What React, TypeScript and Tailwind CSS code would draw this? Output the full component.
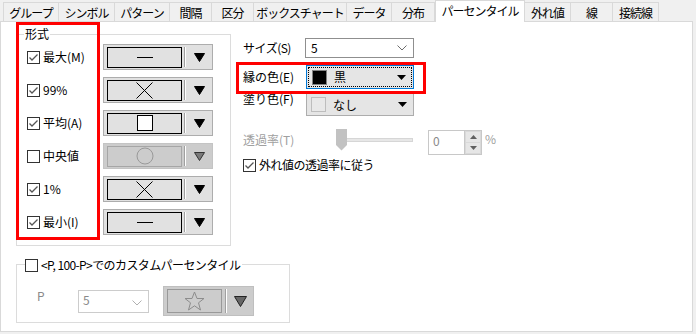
import React from "react";

const tabs = [
  { label: "グループ", w: "w-[56px]" },
  { label: "シンボル", w: "w-[56px]" },
  { label: "パターン", w: "w-[55px]" },
  { label: "間隔", w: "w-[42px]" },
  { label: "区分", w: "w-[42px]" },
  { label: "ボックスチャート", w: "w-[93px]" },
  { label: "データ", w: "w-[45px]" },
  { label: "分布", w: "w-[43px]" },
  { label: "パーセンタイル", w: "w-[90px]", active: true },
  { label: "外れ値", w: "w-[46px]" },
  { label: "線", w: "w-[42px]" },
  { label: "接続線", w: "w-[46px]" },
];

const CheckBox = ({ checked }: { checked: boolean }) => (
  <span className="flex h-[13px] w-[13px] shrink-0 items-center justify-center border border-[#333333] bg-white">
    {checked && (
      <svg width="11" height="11" viewBox="0 0 11 11">
        <polyline points="1.5,5.5 4,8 9.5,2.5" fill="none" stroke="#555555" strokeWidth="1.3" />
      </svg>
    )}
  </span>
);

const DownArrow = ({ disabled }: { disabled?: boolean }) => (
  <svg width="11" height="9" viewBox="0 0 11 9">
    <polygon
      points="0.5,0.5 10.5,0.5 5.5,8.5"
      fill={disabled ? "#7a7a7a" : "#000000"}
      stroke={disabled ? "#333333" : "#000000"}
      strokeWidth="1"
    />
  </svg>
);

const Chevron = ({ color }: { color: string }) => (
  <svg width="10" height="6" viewBox="0 0 10 6">
    <polyline points="0.5,0.5 5,5 9.5,0.5" fill="none" stroke={color} strokeWidth="1" />
  </svg>
);

const SmallArrow = () => (
  <svg width="9" height="5" viewBox="0 0 9 5">
    <polygon points="0,0 9,0 4.5,5" fill="#000000" />
  </svg>
);

// 記号の見本
const Glyph = ({ kind }: { kind: string }) => {
  if (kind === "dash") return <div className="h-px w-[16px] bg-black" />;
  if (kind === "x")
    return (
      <svg width="17" height="17" viewBox="0 0 17 17">
        <line x1="0.5" y1="0.5" x2="16.5" y2="16.5" stroke="#000" strokeWidth="1" />
        <line x1="16.5" y1="0.5" x2="0.5" y2="16.5" stroke="#000" strokeWidth="1" />
      </svg>
    );
  if (kind === "square") return <div className="h-[16px] w-[16px] border border-black bg-white" />;
  if (kind === "circle")
    return (
      <svg width="18" height="18" viewBox="0 0 18 18">
        <circle cx="9" cy="9" r="8" fill="#cccccc" stroke="#999999" strokeWidth="1" />
      </svg>
    );
  return null;
};

const SymbolButton = ({ kind, disabled }: { kind: string; disabled?: boolean }) => (
  <div
    className={`flex h-[26px] w-[110px] items-center border ${
      disabled ? "border-[#c4c4c4] bg-[#cccccc]" : "border-[#adadad] bg-[#e1e1e1]"
    }`}
  >
    <div
      className={`ml-[3px] flex h-[21px] w-[75px] items-center justify-center border ${
        disabled ? "border-[#a6a6a6]" : "border-black"
      }`}
    >
      <Glyph kind={kind} />
    </div>
    <div className="ml-[2px] h-[20px] w-px bg-[#a0a0a0]" />
    <div className="h-[20px] w-px bg-white" />
    <div className="flex flex-1 justify-center">
      <DownArrow disabled={disabled} />
    </div>
  </div>
);

const rows = [
  { label: "最大(M)", checked: true, kind: "dash" },
  { label: "99%", checked: true, kind: "x" },
  { label: "平均(A)", checked: true, kind: "square" },
  { label: "中央値", checked: false, kind: "circle", disabled: true },
  { label: "1%", checked: true, kind: "x" },
  { label: "最小(I)", checked: true, kind: "dash" },
];

export default function App() {
  return (
    <div className="h-[334px] w-[696px] overflow-hidden bg-[#f0f0f0] font-['Noto_Sans_CJK_JP','Noto_Sans',sans-serif] text-[12px] text-black">
      {/* タブ */}
      <div className="flex h-[22px] items-end pl-[3px]">
        {tabs.map((t, i) => (
          <div
            key={t.label}
            className={`${t.w} flex items-center justify-center whitespace-nowrap border-t border-r border-[#d9d9d9] tracking-[-1px] ${
              i === 0 ? "border-l" : ""
            } ${t.active ? "relative z-10 h-[22px] border-l bg-white pb-[2px]" : "h-[20px] bg-[#f0f0f0]"}`}
          >
            {t.label}
          </div>
        ))}
      </div>

      {/* パネル */}
      <div className="relative -mt-px flex h-[311px] w-[693px] flex-col border border-[#d9d9d9] bg-white">
        <div className="flex">
          {/* 形式 */}
          <div className="relative ml-[15px] mt-[12px] h-[212px] w-[215px] border border-[#dcdcdc] pl-[10px] pt-[9px]">
            <span className="absolute left-[7px] top-[-9px] bg-white px-[1px] leading-[16px]">形式</span>
            <div className="flex flex-col gap-[7px]">
              {rows.map((r) => (
                <div key={r.label} className="flex h-[26px] items-center">
                  <div className="flex w-[76px] items-center">
                    <CheckBox checked={r.checked} />
                    <span className="ml-[3px] leading-[16px]">{r.label}</span>
                  </div>
                  <SymbolButton kind={r.kind} disabled={r.disabled} />
                </div>
              ))}
            </div>
          </div>

          {/* 右側 */}
          <div className="ml-[12px] flex flex-col">
            <div className="mt-[16px] flex h-[20px] items-center">
              <span className="w-[62px] tracking-[-0.5px]">サイズ(S)</span>
              <div className="flex h-[20px] w-[109px] items-center justify-between border border-[#8f8f8f] bg-white pl-[5px] pr-[6px]">
                <span>5</span>
                <Chevron color="#6d6d6d" />
              </div>
            </div>

            <div className="mt-[7px] flex h-[24px] items-center">
              <span className="w-[63px]">縁の色(E)</span>
              <div className="h-[24px] w-[108px] border border-[#0078d7] bg-[#e5e5e5] p-px">
                <div className="flex h-full items-center border border-dotted border-black pl-[3px] pr-[5px]">
                  <div className="h-[15px] w-[15px] border border-[#808080] bg-black" />
                  <span className="ml-[7px] flex-1">黒</span>
                  <SmallArrow />
                </div>
              </div>
            </div>

            <div className="mt-[4px] flex h-[23px] items-start">
              <span className="-mt-[2px] w-[63px] leading-[16px]">塗り色(F)</span>
              <div className="flex h-[23px] w-[108px] items-center border border-[#adadad] bg-[#e5e5e5] pl-[4px] pr-[6px]">
                <div className="h-[15px] w-[15px] border border-[#bdbdbd] bg-[#e8e8e8]" />
                <span className="ml-[7px] flex-1">なし</span>
                <SmallArrow />
              </div>
            </div>

            <div className="mt-[13px] flex items-start">
              <span className="mt-[3px] w-[93px] leading-[16px] text-[#a0a0a0]">透過率(T)</span>
              <div className="relative h-[22px] w-[77px]">
                <div className="absolute left-[4px] right-0 top-[9px] h-[4px] border border-[#d6d6d6] bg-[#e7e7e7]" />
                <svg className="absolute left-0 top-0" width="11" height="22" viewBox="0 0 11 22">
                  <polygon points="0,0 11,0 11,16 5.5,21.5 0,16" fill="#c2c2c2" />
                </svg>
              </div>
              <div className="ml-[15px] mt-px flex h-[25px] w-[54px] border border-[#c8c8c8] bg-white">
                <span className="flex-1 pl-[4px] leading-[20px] text-[#8a8a8a]">0</span>
                <div className="flex w-[17px] flex-col gap-px border-l border-[#c8c8c8] bg-[#d9d9d9] p-px">
                  <div className="flex flex-1 items-center justify-center bg-[#e6e6e6]">
                    <svg width="7" height="4" viewBox="0 0 7 4">
                      <polygon points="0,4 7,4 3.5,0" fill="#606060" />
                    </svg>
                  </div>
                  <div className="flex flex-1 items-center justify-center bg-[#e6e6e6]">
                    <svg width="7" height="4" viewBox="0 0 7 4">
                      <polygon points="0,0 7,0 3.5,4" fill="#606060" />
                    </svg>
                  </div>
                </div>
              </div>
              <span className="ml-[3px] mt-[2px] leading-[16px] text-[#a0a0a0]">%</span>
            </div>

            <div className="mt-[3px] flex h-[14px] items-center">
              <CheckBox checked />
              <span className="ml-[3px] tracking-[-0.5px]">外れ値の透過率に従う</span>
            </div>
          </div>
        </div>

        {/* カスタムパーセンタイル */}
        <div className="relative ml-[15px] mt-[18px] flex h-[59px] w-[274px] items-start border border-[#dcdcdc] pl-[20px] pt-[21px]">
          <div className="absolute left-[8px] top-[-8px] flex items-center bg-white pr-[2px]">
            <CheckBox checked={false} />
            <span className="ml-[3px] leading-[16px] tracking-[-0.6px]">&lt;P, 100-P&gt;でのカスタムパーセンタイル</span>
          </div>
          <span className="mt-[2px] w-[41px] leading-[16px] text-[#8a8a8a]">P</span>
          <div className="mt-[4px] flex h-[23px] w-[71px] items-start justify-between border border-[#cccccc] bg-white pl-[4px] pr-[6px]">
            <span className="leading-[18px] text-[#8a8a8a]">5</span>
            <div className="mt-[9px]">
              <Chevron color="#b0b0b0" />
            </div>
          </div>
          <div className="ml-[14px] flex h-[30px] w-[91px] items-center border border-[#bfbfbf] bg-[#cccccc]">
            <div className="ml-[3px] flex h-[24px] w-[55px] items-center justify-center border border-[#999999]">
              <svg width="21" height="20" viewBox="0 0 21 20">
                <polygon
                  points="10.5,1 13,7.5 20,7.5 14.5,11.8 16.5,19 10.5,14.8 4.5,19 6.5,11.8 1,7.5 8,7.5"
                  fill="none"
                  stroke="#8c8c8c"
                  strokeWidth="1"
                />
              </svg>
            </div>
            <div className="ml-[3px] h-[24px] w-px bg-[#a0a0a0]" />
            <div className="h-[24px] w-px bg-white" />
            <div className="flex flex-1 justify-center">
              <svg width="13" height="11" viewBox="0 0 13 11">
                <polygon points="0.5,0.5 12.5,0.5 6.5,10.5" fill="#666666" stroke="#222222" strokeWidth="1" />
              </svg>
            </div>
          </div>
        </div>

        {/* 赤枠 */}
        <div className="absolute left-[15px] top-0 h-[218px] w-[84px] border-[3px] border-[#ff0000]" />
        <div className="absolute left-[235px] top-[40px] h-[32px] w-[190px] border-[3px] border-[#ff0000]" />
      </div>
    </div>
  );
}
